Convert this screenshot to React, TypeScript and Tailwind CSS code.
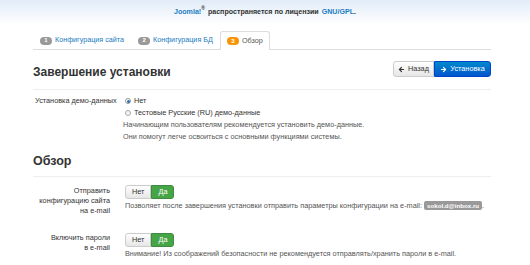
import { ArrowLeft, ArrowRight } from "lucide-react";

const font = { fontFamily: '"Liberation Sans", Arial, sans-serif' };

const tabs = [
  { n: "1", name: "Конфигурация сайта", active: false },
  { n: "2", name: "Конфигурация БД", active: false },
  { n: "3", name: "Обзор", active: true },
];

const Toggle = () => (
  <div className="flex h-[14px] text-[7.3px] leading-none">
    <span className="flex items-center px-[6px] border border-[#ccc] rounded-l-[3px] bg-gradient-to-b from-white to-[#e6e6e6] text-[#333]">
      Нет
    </span>
    <span className="flex items-center px-[6px] border border-[#3d8b3d] rounded-r-[3px] bg-[#46a546] text-white">
      Да
    </span>
  </div>
);

export default function App() {
  return (
    <div className="w-[530px] h-[265px] overflow-hidden bg-white text-[#333] whitespace-nowrap" style={font}>
      {/* Header */}
      <div className="h-[25px] bg-gradient-to-b from-[#e1ecf8] to-white flex items-center justify-center text-[7.1px] font-bold text-[#333]">
        <span className="text-[#1a7dc1]">Joomla!</span>
        <sup className="text-[5px] -mt-1">®</sup>
        <span className="ml-[3px]">распространяется по лицензии</span>
        <span className="ml-[3px] text-[#1a7dc1]">GNU/GPL</span>
        <span>.</span>
      </div>

      <div className="ml-[33px] w-[458px]">
        {/* Tabs */}
        <div className="mt-[7px] flex items-end h-[18px] border-b border-[#ddd]">
          {tabs.map((t) => (
            <div
              key={t.n}
              className={`flex items-center px-[6px] border border-b-0 text-[7.2px] ${
                t.active
                  ? "border-[#ddd] bg-white rounded-t-[3px] text-[#555] -mb-px h-[19px]"
                  : "border-transparent text-[#1a7dc1] h-[18px]"
              }`}
            >
              <span
                className={`inline-flex items-center justify-center w-[12px] h-[8px] rounded-full text-[6px] text-white font-bold mr-[3px] ${
                  t.active ? "bg-[#f89406]" : "bg-[#999]"
                }`}
              >
                {t.n}
              </span>
              {t.name}
            </div>
          ))}
        </div>

        {/* Section 1 */}
        <div className="mt-[11px] flex items-start justify-between pb-[9px] border-b border-[#eee]">
          <h3 className="text-[12px] font-bold text-[#333] leading-[16px] mt-[3px]">Завершение установки</h3>
          <div className="flex h-[16px] text-[7.3px]">
            <button className="flex items-center gap-[3px] w-[41px] justify-center border border-[#ccc] rounded-l-[3px] bg-gradient-to-b from-white to-[#e6e6e6] text-[#333]">
              <ArrowLeft size={7} strokeWidth={4} />
              Назад
            </button>
            <button className="flex items-center gap-[3px] w-[57px] justify-center border border-[#04c] rounded-r-[3px] bg-gradient-to-b from-[#0088cc] to-[#0055cc] text-white">
              <ArrowRight size={7} strokeWidth={4} />
              Установка
            </button>
          </div>
        </div>

        <div className="mt-[5px] flex text-[7.3px] leading-[12px]">
          <div className="w-[88px] pl-[2px] text-[#333]">Установка демо-данных</div>
          <div className="ml-[2px]">
            <div className="flex items-center gap-[3px] ml-[2px]">
              <span className="w-[6px] h-[6px] rounded-full border border-[#999] flex items-center justify-center">
                <span className="w-[3px] h-[3px] rounded-full bg-[#2a6fb5]" />
              </span>
              <span>Нет</span>
            </div>
            <div className="flex items-center gap-[3px] ml-[2px]">
              <span className="w-[6px] h-[6px] rounded-full border border-[#aaa] bg-[#f4f4f4]" />
              <span>Тестовые Русские (RU) демо-данные</span>
            </div>
            <div className="text-[#555]">Начинающим пользователям рекомендуется установить демо-данные.</div>
            <div className="text-[#555]">Они помогут легче освоиться с основными функциями системы.</div>
          </div>
        </div>

        {/* Section 2 */}
        <div className="mt-[10px] pb-[7px] border-b border-[#eee]">
          <h3 className="text-[12.5px] font-bold text-[#333] leading-[16px]">Обзор</h3>
        </div>

        <div className="mt-[8px] flex text-[7.3px]">
          <div className="w-[77px] text-right pt-[1px] leading-[10px]">
            Отправить
            <br />
            конфигурацию сайта
            <br />
            на e-mail
          </div>
          <div className="ml-[15px]">
            <Toggle />
            <div className="mt-[1px] leading-[11px] text-[#555] flex items-center">
              Позволяет после завершения установки отправить параметры конфигурации на e-mail:
              <span className="ml-[2px] px-[3px] h-[9px] leading-[9px] rounded-[2px] bg-[#999] text-white text-[6.2px] font-bold">
                sokol.d@inbox.ru
              </span>
              .
            </div>
          </div>
        </div>

        <div className="mt-[17px] flex text-[7.3px]">
          <div className="w-[77px] text-right leading-[10px]">
            Включить пароли
            <br />в e-mail
          </div>
          <div className="ml-[15px]">
            <Toggle />
            <div className="mt-[1px] leading-[11px] text-[#555]">
              Внимание! Из соображений безопасности не рекомендуется отправлять/хранить пароли в e-mail.
            </div>
          </div>
        </div>
      </div>
    </div>
  );
}
